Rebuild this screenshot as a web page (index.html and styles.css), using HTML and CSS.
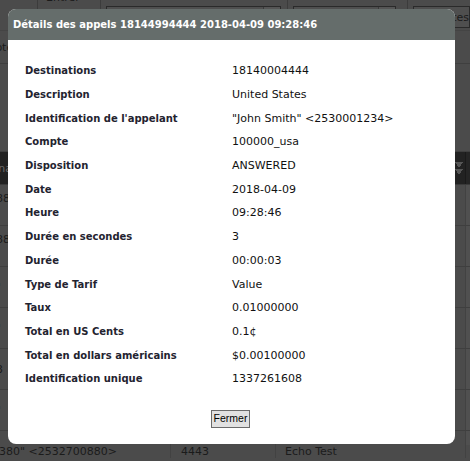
FILE: index.html
```html
<!DOCTYPE html>
<html lang="fr">
<head>
<meta charset="utf-8">
<title>Détails des appels</title>
<link rel="stylesheet" href="styles.css">
</head>
<body>
<div class="page">
  <div class="filters">
    <div class="fcell c-a"></div>
    <div class="fcell c-b"><span class="peek-top">Entrer</span></div>
    <div class="fcell c-c"><div class="input"><span class="ibtn"></span></div></div>
    <div class="fcell c-d"><div class="input"><span class="ibtn"></span></div></div>
    <div class="fcell c-e"><div class="input"><span class="itext">Tous comptes</span></div></div>
  </div>
  <div class="brow r-ac"><span class="shift">Compte ac</span></div>
  <div class="brow r-blank"></div>
  <div class="brow head">
    <div class="cell k1"><span class="shift">Destina</span></div>
    <div class="cell k2"></div>
    <div class="cell k3"><span class="sort"></span></div>
    <div class="cell k4"></div>
  </div>
  <div class="brow data two"><div class="cell k1"><span class="shift2">"25388<br>7</span></div><div class="cell k2"></div><div class="cell k3"></div><div class="cell k4"></div></div>
  <div class="brow data two"><div class="cell k1"><span class="shift2">"25388<br>7</span></div><div class="cell k2"></div><div class="cell k3"></div><div class="cell k4"></div></div>
  <div class="brow data"><div class="cell k1"><span class="shift">Echs"</span></div><div class="cell k2"></div><div class="cell k3"></div><div class="cell k4"></div></div>
  <div class="brow data"><div class="cell k1"><span class="shift">Echs"</span></div><div class="cell k2"></div><div class="cell k3"></div><div class="cell k4"></div></div>
  <div class="brow data"><div class="cell k1"><span class="shift">"2573</span></div><div class="cell k2"></div><div class="cell k3"></div><div class="cell k4"></div></div>
  <div class="brow data"><div class="cell k1"><span class="shift">Echs"</span></div><div class="cell k2"></div><div class="cell k3"></div><div class="cell k4"></div></div>
  <div class="brow data last">
    <div class="cell k1"><span class="lasttext">380" &lt;2532700880&gt;</span></div>
    <div class="cell k2">4443</div>
    <div class="cell k3">Echo Test</div>
    <div class="cell k4"></div>
  </div>

  <div class="dialog">
    <div class="dtitle">Détails des appels 18144994444 2018-04-09 09:28:46</div>
    <div class="dbody">
      <div class="details">
        <div class="lbl">Destinations</div><div class="val">18140004444</div>
        <div class="lbl">Description</div><div class="val">United States</div>
        <div class="lbl">Identification de l'appelant</div><div class="val">"John Smith" &lt;2530001234&gt;</div>
        <div class="lbl">Compte</div><div class="val">100000_usa</div>
        <div class="lbl">Disposition</div><div class="val">ANSWERED</div>
        <div class="lbl">Date</div><div class="val">2018-04-09</div>
        <div class="lbl">Heure</div><div class="val">09:28:46</div>
        <div class="lbl">Durée en secondes</div><div class="val">3</div>
        <div class="lbl">Durée</div><div class="val">00:00:03</div>
        <div class="lbl">Type de Tarif</div><div class="val">Value</div>
        <div class="lbl">Taux</div><div class="val">0.01000000</div>
        <div class="lbl">Total en US Cents</div><div class="val">0.1¢</div>
        <div class="lbl">Total en dollars américains</div><div class="val">$0.00100000</div>
        <div class="lbl">Identification unique</div><div class="val">1337261608</div>
      </div>
      <div class="actions"><button class="btn" type="button">Fermer</button></div>
    </div>
  </div>
</div>
</body>
</html>
```

FILE: styles.css
```css
html, body {
  margin: 0;
  padding: 0;
}
body {
  background: #4b4b4b;
  font-family: "DejaVu Sans", Verdana, sans-serif;
}
.page {
  position: relative;
  width: 470px;
  height: 461px;
  overflow: hidden;
  background: #4b4b4b;
  color: #1b1b1b;
  font-size: 11px;
}

/* ---------- dimmed background page ---------- */
.filters {
  display: flex;
  height: 30px;
  border-bottom: 1px solid #444;
}
.fcell {
  border-right: 1px solid #3c3c3c;
  box-sizing: border-box;
  position: relative;
  overflow: hidden;
}
.c-a { width: 38px; }
.c-b { width: 63px; }
.c-c { width: 187px; padding: 6px 6px 0 5px; }
.c-d { width: 120px; padding: 6px 11px 0 5px; }
.c-e { flex: 1; padding: 6px 0 0 5px; border-right: 0; }
.peek-top {
  display: block;
  margin: -8px 0 0 8px;
  line-height: 12px;
}
.input {
  height: 20px;
  border: 1px solid #2a2a2a;
  background: #4f4f4f;
  display: flex;
  justify-content: flex-end;
}
.ibtn {
  width: 16px;
  border-left: 1px solid #3a3a3a;
  background: #555;
}
.itext {
  margin-right: auto;
  padding: 4px 0 0 30px;
  white-space: nowrap;
}
.brow {
  display: flex;
  border-bottom: 1px solid #3f3f3f;
  box-sizing: border-box;
  overflow: hidden;
  white-space: nowrap;
}
.r-ac { height: 33px; align-items: center; }
.r-blank { height: 88px; }
.shift { margin-left: -30px; }
.shift2 { margin-left: -30px; line-height: 13px; }
.head {
  height: 33px;
  background: #222;
  color: #6a6a6a;
  border-bottom: 1px solid #3a3a3a;
}
.cell {
  box-sizing: border-box;
  border-right: 1px solid #424242;
  display: flex;
  align-items: center;
  overflow: hidden;
}
.k1 { width: 171px; }
.k2 { width: 105px; padding-left: 8px; }
.k3 { width: 190px; padding-left: 8px; justify-content: flex-end; }
.k4 { flex: 1; border-right: 0; background: #505050; }
.head .k4 { background: #252525; }
.head .cell { border-right-color: #1a1a1a; }
.sort {
  width: 8px;
  height: 13px;
  margin-right: 2px;
  background:
    linear-gradient(to top right, transparent 50%, #555 50%) left 0 top 0 / 4px 6px no-repeat,
    linear-gradient(to top left, transparent 50%, #555 50%) right 0 top 0 / 4px 6px no-repeat;
  position: relative;
}
.sort::after {
  content: "";
  position: absolute;
  left: 0;
  bottom: 0;
  width: 8px;
  height: 6px;
  background:
    linear-gradient(to bottom right, transparent 50%, #555 50%) left 0 top 0 / 4px 6px no-repeat,
    linear-gradient(to bottom left, transparent 50%, #555 50%) right 0 top 0 / 4px 6px no-repeat;
  transform: rotate(180deg);
}
.data { height: 41px; }
.data .cell { align-items: center; }
.last { height: 40px; align-items: flex-start; }
.last .cell { align-items: flex-start; padding-top: 14px; }
.last .k2 { padding-left: 10px; }
.last .k3 { justify-content: flex-start; padding-left: 9px; }
.lasttext { margin-left: -1px; }

/* ---------- dialog (overlay) ---------- */
.dialog {
  position: absolute;
  left: 8px;
  top: 9px;
  width: 447px;
  height: 435px;
  background: #fff;
  border-radius: 8px;
  overflow: hidden;
  display: flex;
  flex-direction: column;
}
.dtitle {
  height: 31px;
  line-height: 31px;
  background: #656d6b;
  color: #fff;
  font-weight: bold;
  font-size: 10px;
  letter-spacing: 0;
  padding-left: 5px;
  white-space: nowrap;
}
.dbody {
  padding: 19px 0 0 17px;
  display: flex;
  flex-direction: column;
}
.details {
  display: grid;
  grid-template-columns: 207px 1fr;
  grid-auto-rows: 23.7px;
  align-items: center;
}
.lbl {
  font-weight: bold;
  font-size: 10px;
  color: #23232f;
  white-space: nowrap;
}
.val {
  font-size: 11px;
  color: #111;
  white-space: nowrap;
}
.actions {
  display: flex;
  justify-content: center;
  padding: 19px 17px 0 0;
  margin-left: -17px;
  padding-left: 17px;
}
.btn {
  font-family: "Liberation Sans", Arial, sans-serif;
  font-size: 10.5px;
  height: 18px;
  padding: 0 2px;
  margin: 0;
  border: 1px solid #6b6b6b;
  background: #e1e1e1;
  color: #000;
  line-height: 15px;
  border-radius: 0;
  transform: translateX(-1px);
}
```
